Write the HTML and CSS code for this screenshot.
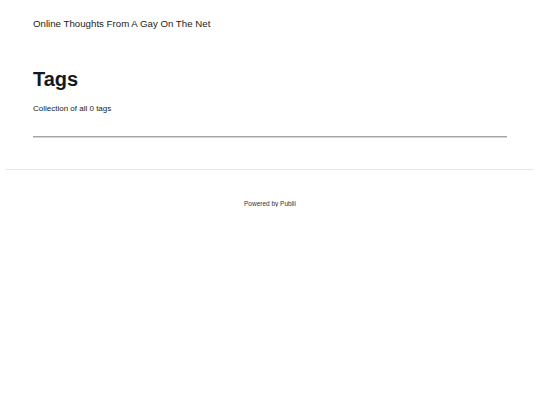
FILE: index.html
```html
<!DOCTYPE html>
<html lang="en">
<head>
    <meta charset="UTF-8">
    <meta name="viewport" content="width=device-width, initial-scale=1.0">
    <title>Tags - Online Thoughts From A Gay On The Net</title>
    <link rel="stylesheet" href="styles.css">
</head>
<body>
    <header class="top">
        <a class="logo" href="#">Online Thoughts From A Gay On The Net</a>
    </header>

    <main class="page">
        <h1 class="page-title">Tags</h1>
        <p class="page-desc">Collection of all 0 tags</p>
        <hr class="page-rule">
    </main>

    <footer class="footer">
        <p class="copyright">Powered by Publii</p>
    </footer>
</body>
</html>
```

FILE: styles.css
```css
body {
    margin: 0;
    font-family: "Liberation Sans", Arial, sans-serif;
    color: #17181e;
    background: #fff;
}
.top {
    max-width: 474px;
    margin: 0 auto;
    padding: 13px 0 0;
    height: 30px;
}
.logo {
    font-size: 9.7px;
    color: #222;
    text-decoration: none;
}
.page {
    max-width: 474px;
    margin: 0 auto;
    padding-top: 24px;
}
.page-title {
    font-size: 20px;
    font-weight: bold;
    margin: 0;
    line-height: 24px;
}
.page-desc {
    font-size: 8px;
    color: #222;
    margin: 13px 0 0;
}
.page-rule {
    border: 0;
    border-top: 1px solid #a5a5a5;
    border-bottom: 1px solid #d4d4d4;
    margin: 23px 0 0;
}
.footer {
    margin: 31px 6px 0;
    border-top: 1px solid #e6e6e6;
    padding-top: 30px;
    text-align: center;
}
.copyright {
    font-size: 6.5px;
    color: #333;
    margin: 0;
}
```
